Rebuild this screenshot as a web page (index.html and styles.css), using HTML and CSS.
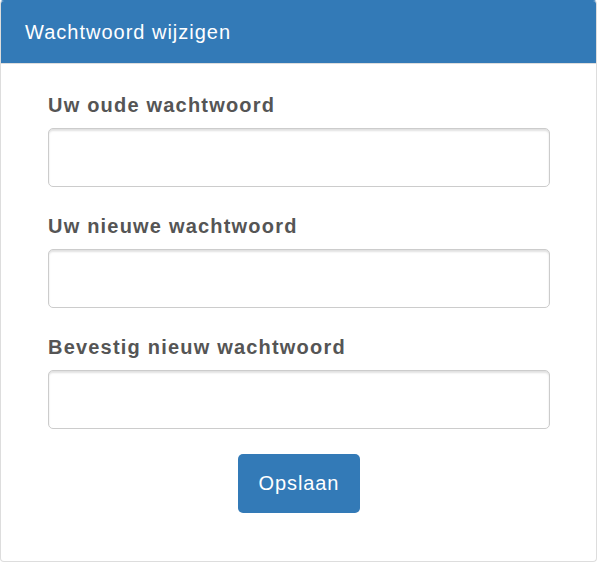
FILE: index.html
```html
<!DOCTYPE html>
<html lang="nl">
<head>
    <meta charset="UTF-8">
    <meta name="viewport" content="width=device-width, initial-scale=1.0">
    <title>Wachtwoord wijzigen</title>
    <link rel="stylesheet" href="styles.css">
</head>
<body>

    <div class="panel">
        <div class="panel-heading">Wachtwoord wijzigen</div>
        <form class="panel-body">
            <div class="form-group">
                <label for="old">Uw oude wachtwoord</label>
                <input type="password" id="old" class="form-control">
            </div>
            <div class="form-group">
                <label for="new">Uw nieuwe wachtwoord</label>
                <input type="password" id="new" class="form-control">
            </div>
            <div class="form-group">
                <label for="confirm">Bevestig nieuw wachtwoord</label>
                <input type="password" id="confirm" class="form-control">
            </div>
            <div class="actions">
                <button type="submit" class="btn-primary">Opslaan</button>
            </div>
        </form>
    </div>

</body>
</html>
```

FILE: styles.css
```css
body {
    font-family: "Liberation Sans", Arial, sans-serif;
    background-color: #fff;
    margin: 0;
    padding: 0;
}
.panel {
    width: 597px;
    height: 562px;
    box-sizing: border-box;
    border: 1px solid #ddd;
    border-top-color: #337ab7;
    border-radius: 4px;
    background: white;
    display: flex;
    flex-direction: column;
}
.panel-heading {
    background: #337ab7;
    color: white;
    font-size: 20px;
    letter-spacing: 1px;
    line-height: 28px;
    padding: 17px 24px 17px;
    border-bottom: 1px solid #ddd;
    border-radius: 3px 3px 0 0;
}
.panel-body {
    padding: 30px 46px 0 47px;
    display: flex;
    flex-direction: column;
}
.form-group {
    display: flex;
    flex-direction: column;
    margin-bottom: 28px;
}
.form-group:nth-child(3) {
    margin-bottom: 25px;
}
label {
    font-size: 20px;
    font-weight: bold;
    letter-spacing: 1.2px;
    line-height: 22px;
    color: #555;
    margin-bottom: 12px;
}
.form-control {
    height: 59px;
    box-sizing: border-box;
    border: 1px solid #ccc;
    border-radius: 5px;
    box-shadow: inset 0 2px 2px rgba(0,0,0,0.12);
    font-size: 20px;
    padding: 0 14px;
    margin: 0;
}
.actions {
    display: flex;
    justify-content: center;
}
.btn-primary {
    background: #337ab7;
    color: white;
    border: none;
    border-radius: 5px;
    font-family: "Liberation Sans", Arial, sans-serif;
    font-size: 20px;
    letter-spacing: 0.9px;
    width: 122px;
    height: 59px;
    cursor: pointer;
}
.btn-primary:hover {
    background: #286090;
}
```
